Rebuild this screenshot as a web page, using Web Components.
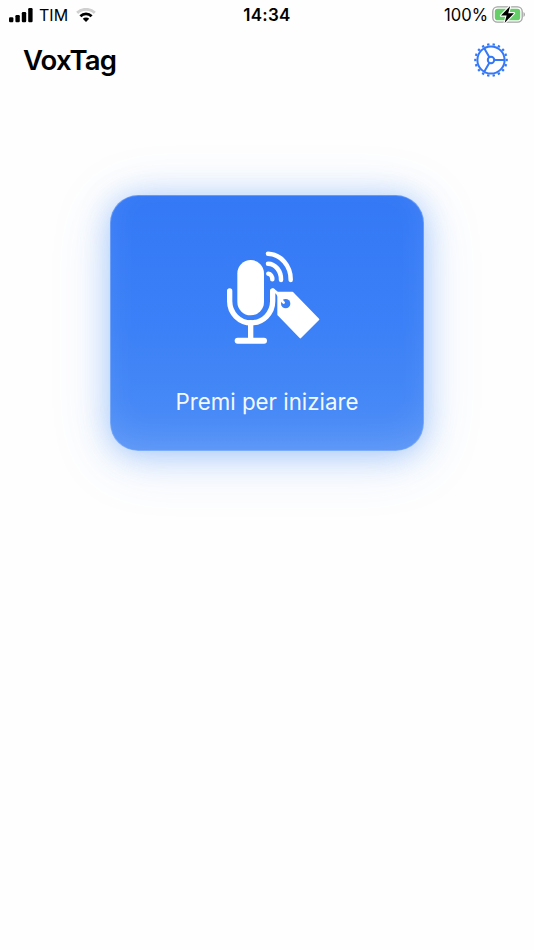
<!DOCTYPE html>
<html lang="it">
<head>
<meta charset="UTF-8">
<title>VoxTag</title>
<style>
    body {
        margin: 0;
        min-height: 100vh;
        background: #fefefe;
        color: #000;
        font-family: Inter, "Liberation Sans", sans-serif;
    }
</style>
</head>
<body>
<vox-app>
    <status-bar slot="status" carrier="TIM" time="14:34" battery="100%"></status-bar>
    <app-header slot="header">VoxTag</app-header>
    <record-button>Premi per iniziare</record-button>
</vox-app>

<script>
class voxApp extends HTMLElement {
    constructor() {
        super();
        this.attachShadow({ mode : 'open' });
    }
    connectedCallback() {
        this.shadowRoot.innerHTML = `
            <style>
                :host {
                    display: flex;
                    flex-direction: column;
                    height: 100vh;
                }
                main {
                    display: flex;
                    justify-content: center;
                    padding-top: 105px;
                }
            </style>
            <slot name="status"></slot>
            <slot name="header"></slot>
            <main><slot></slot></main>
        `;
    }
}

class statusBar extends HTMLElement {
    constructor() {
        super();
        this.attachShadow({ mode : 'open' });
    }
    connectedCallback() {
        this.shadowRoot.innerHTML = `
            <section class="left">
                <svg width="24" height="15" viewBox="0 0 24 15">
                    <rect x="0" y="9.3" width="4.4" height="5" rx="1.2"/>
                    <rect x="6.4" y="7" width="4.4" height="7.3" rx="1.2"/>
                    <rect x="12.8" y="4" width="4.4" height="10.3" rx="1.2"/>
                    <rect x="19.2" y="0" width="4.4" height="14.3" rx="1.2"/>
                </svg>
                <span class="carrier">${this.getAttribute('carrier')}</span>
                <svg class="wifi" width="20" height="15" viewBox="0 0 20 15" fill="none">
                    <path d="M1.2 4.9A12.6 12.6 0 0 1 18.8 4.9" stroke="#d0d0d0" stroke-width="2.9"/>
                    <path d="M4.4 8.2A8.1 8.1 0 0 1 15.6 8.2" stroke="#000" stroke-width="2.8"/>
                    <path d="M6.8 10.7A4.6 4.6 0 0 1 13.2 10.7L10 14Z" fill="#000"/>
                </svg>
            </section>
            <span class="time">${this.getAttribute('time')}</span>
            <section class="right">
                <span class="level">${this.getAttribute('battery')}</span>
                <svg width="34" height="20" viewBox="0 0 34 20">
                    <rect x=".8" y="1.8" width="29.4" height="15.4" rx="4.6" fill="#fff" stroke="#a3a3a3" stroke-width="1.3"/>
                    <rect x="2.8" y="3.8" width="25.4" height="11.4" rx="2.8" fill="#65ce68"/>
                    <path d="M31.5 7v5c1.9-.7 1.9-4.3 0-5z" fill="#a3a3a3"/>
                    <path d="M18.2 1L9 10.6h5.6L12.6 18l9.4-9.8h-5.8z" fill="#000" stroke="#fff" stroke-width="2.2" stroke-linejoin="round" paint-order="stroke"/>
                </svg>
            </section>
            ${this.getStyles()}
        `;
    }
    getStyles() {
        return `
            <style>
                :host {
                    display: grid;
                    grid-template-columns: 1fr auto 1fr;
                    align-items: center;
                    height: 30px;
                    padding: 0 8px 0 9px;
                    font-size: 16px;
                }
                section {
                    display: flex;
                    align-items: center;
                }
                svg {
                    display: block;
                }
                .right {
                    justify-content: flex-end;
                    gap: 4px;
                }
                .carrier {
                    margin: 0 8px 0 6px;
                }
                .level {
                    font-size: 16.6px;
                }
                .time {
                    font-weight: 600;
                    font-size: 17px;
                    letter-spacing: .25px;
                    margin-right: 1px;
                }
            </style>
        `;
    }
}

class appHeader extends HTMLElement {
    constructor() {
        super();
        this.attachShadow({ mode : 'open' });
    }
    getTeeth() {
        let teeth = '';
        for(let i = 0; i < 18; i++) {
            teeth += `<path d="M18 3.4V1.2" transform="rotate(${i * 20 + 10} 18 18)"/>`;
        }
        return teeth;
    }
    connectedCallback() {
        this.shadowRoot.innerHTML = `
            <style>
                :host {
                    display: flex;
                    justify-content: space-between;
                    align-items: center;
                    height: 60px;
                    padding: 0 25px 0 23px;
                }
                h1 {
                    margin: 0;
                    font-size: 27.5px;
                    font-weight: 600;
                    letter-spacing: -.85px;
                }
                svg {
                    display: block;
                }
            </style>
            <h1><slot></slot></h1>
            <svg width="36" height="36" viewBox="0 0 36 36" fill="none" stroke="#3478f6" stroke-width="2">
                <circle cx="18" cy="18" r="13.6"/>
                <circle cx="18" cy="18" r="3.2"/>
                <path d="M21.2 18H31.6M16.4 15.2L11.2 6.2M16.4 20.8L11.2 29.8"/>
                <g stroke-width="2.4">${this.getTeeth()}</g>
            </svg>
        `;
    }
}

class recordButton extends HTMLElement {
    constructor() {
        super();
        this.attachShadow({ mode : 'open' });
    }
    connectedCallback() {
        this.shadowRoot.innerHTML = `
            <button>
                <svg width="96" height="96" viewBox="30 30 288 288" fill="none" stroke="#fff" stroke-linecap="round" stroke-linejoin="round">
                    <rect x="67" y="60" width="80" height="166" rx="40" fill="#fff" stroke="none"/>
                    <path d="M44 153V184A64 64 0 0 0 173 184V153" stroke-width="16"/>
                    <path d="M107 248V300" stroke-width="16"/>
                    <path d="M68 302H147" stroke-width="18"/>
                    <path d="M159 41A70 77 0 0 1 227 120M159 71A39 47 0 0 1 198 120M160 101A13 17 0 0 1 172 118" stroke-width="13.5"/>
                    <path d="M190 158H232L310 238L256 292L190 224Z" fill="#fff" stroke-width="6"/>
                    <circle cx="212" cy="191" r="14" fill="#3b7ff7" stroke="none"/>
                    <path d="M174 150Q188 158 192 168T206 188" stroke-width="8"/>
                </svg>
                <span><slot></slot></span>
            </button>
            ${this.getStyles()}
        `;
    }
    getStyles() {
        return `
            <style>
                :host {
                    display: block;
                }
                button {
                    display: flex;
                    flex-direction: column;
                    align-items: center;
                    box-sizing: border-box;
                    width: 314px;
                    height: 256px;
                    padding: 54px 0 0 12px;
                    border: 1px solid rgba(255, 255, 255, .25);
                    border-radius: 28px;
                    background: linear-gradient(#3478f6, #3b80f7 50%, #4487f6 78%, #508ff7) border-box;
                    box-shadow: inset 0 -14px 36px -8px rgba(255, 255, 255, .14), 0 3px 30px rgba(70, 145, 245, .42), 0 8px 60px rgba(70, 135, 245, .18);
                    color: #fff;
                    font-family: inherit;
                    font-size: 22.3px;
                }
                span {
                    margin: 42px 12px 0 0;
                    color: #f2f9ff;
                }
            </style>
        `;
    }
}

customElements.define('vox-app', voxApp);
customElements.define('status-bar', statusBar);
customElements.define('app-header', appHeader);
customElements.define('record-button', recordButton);
</script>
</body>
</html>
